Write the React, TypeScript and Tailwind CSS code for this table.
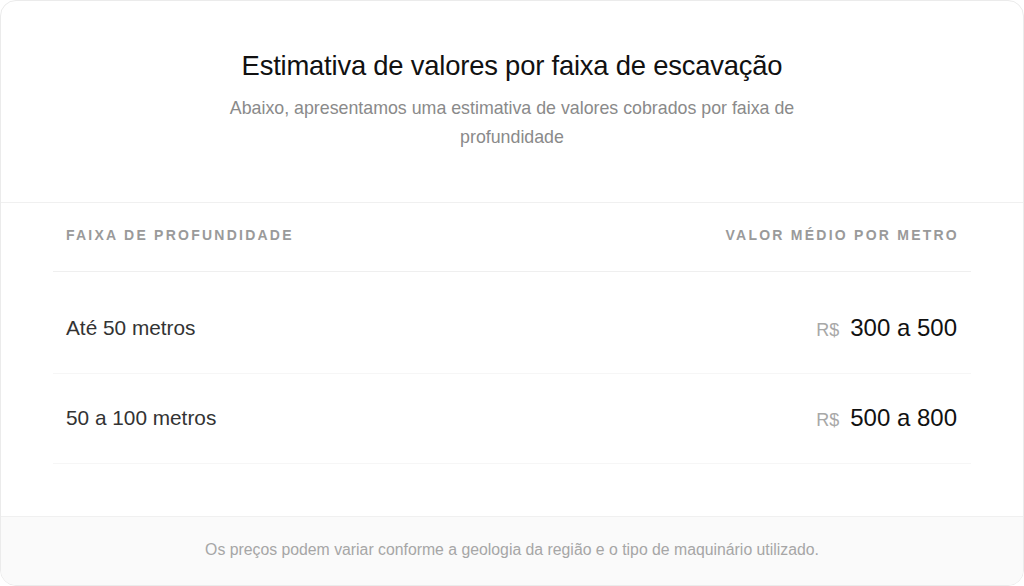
const rows = [
  { range: "Até 50 metros", value: "300 a 500" },
  { range: "50 a 100 metros", value: "500 a 800" },
];

export default function App() {
  return (
    <div className="w-[1024px] h-[586px] bg-white font-['Liberation_Sans',Arial,sans-serif]">
      <div className="h-full flex flex-col rounded-2xl border border-[#ebebeb] overflow-hidden bg-white">
        {/* Heading */}
        <div className="pt-[47px] pb-[50px] px-8 flex flex-col items-center text-center border-b border-[#f0f0f0]">
          <h2 className="text-[27.4px] leading-[36px] text-[#111] tracking-[-0.2px]">
            Estimativa de valores por faixa de escavação
          </h2>
          <p className="mt-[10px] max-w-[600px] text-[17.8px] leading-[29px] text-[#8a8a8a]">
            Abaixo, apresentamos uma estimativa de valores cobrados por faixa de profundidade
          </p>
        </div>

        {/* Table */}
        <div className="mx-[52px] flex-1">
          <div className="flex justify-between items-center h-[69px] pb-[4px] pl-[13px] pr-[14px] border-b border-[#efefef] text-[14px] font-bold uppercase tracking-[0.16em] text-[#9a9a9a]">
            <span>Faixa de profundidade</span>
            <span className="-mr-[2px]">Valor médio por metro</span>
          </div>
          <div className="mt-[12px]">
            {rows.map((row, idx) => (
              <div
                key={idx}
                className="flex justify-between items-center h-[90px] pb-[2px] pl-[13px] pr-[14px] border-b border-[#f6f6f6]"
              >
                <span className="text-[20.8px] text-[#333]">{row.range}</span>
                <span className="flex items-baseline gap-[11px]">
                  <span className="text-[18px] text-[#a8a8a8]">R$</span>
                  <span className="text-[24px] text-[#111]">{row.value}</span>
                </span>
              </div>
            ))}
          </div>
        </div>

        {/* Footer note */}
        <div className="h-[69px] pb-[2px] flex items-center justify-center bg-[#fafafa] border-t border-[#f0f0f0]">
          <p className="text-[15.8px] text-[#a6a6a6]">
            Os preços podem variar conforme a geologia da região e o tipo de maquinário utilizado.
          </p>
        </div>
      </div>
    </div>
  );
}
